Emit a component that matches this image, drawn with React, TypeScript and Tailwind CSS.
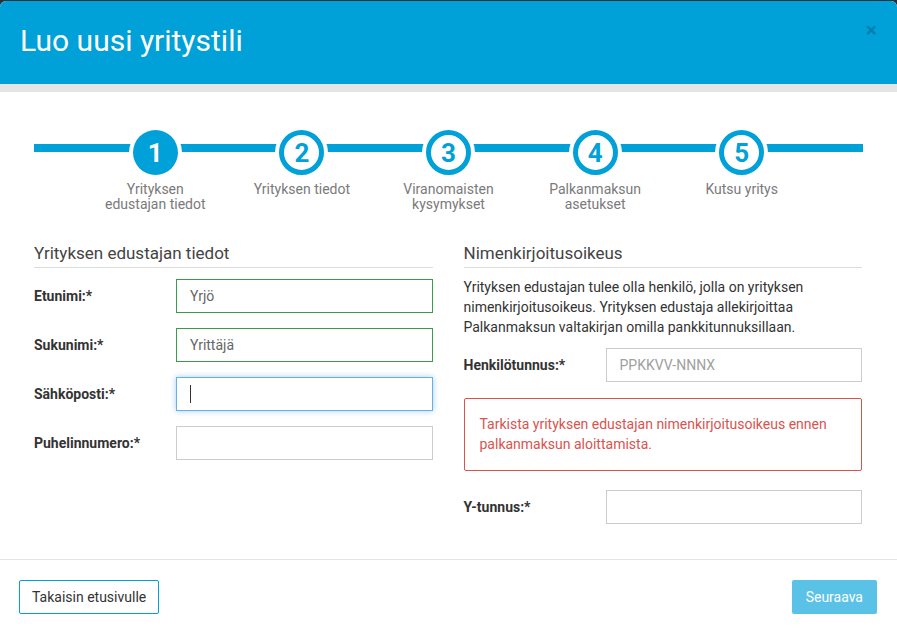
import { ReactNode } from 'react';

const steps = [
  { n: 1, label: ['Yrityksen', 'edustajan tiedot'], active: true },
  { n: 2, label: ['Yrityksen tiedot'] },
  { n: 3, label: ['Viranomaisten', 'kysymykset'] },
  { n: 4, label: ['Palkanmaksun', 'asetukset'] },
  { n: 5, label: ['Kutsu yritys'] },
];

function Row({ label, children }: { label: string; children: ReactNode }) {
  return (
    <div className="flex items-center">
      <div className="w-[142px] shrink-0 text-[14px] font-bold text-[#333]">{label}</div>
      <div className="flex-1">{children}</div>
    </div>
  );
}

function Field({ value, state, placeholder }: { value?: string; state?: 'ok' | 'focus'; placeholder?: string }) {
  const border =
    state === 'ok'
      ? 'border-[#3c9b4a]'
      : state === 'focus'
      ? 'border-[#66afe9] shadow-[0_0_6px_rgba(102,175,233,0.6)]'
      : 'border-[#cccccc]';
  return (
    <div className={`h-[34px] border ${border} flex items-center px-[13px] text-[14px] bg-white`}>
      {value ? <span className="text-[#666]">{value}</span> : null}
      {placeholder ? <span className="text-[#a0a0a0]">{placeholder}</span> : null}
      {state === 'focus' ? <span className="w-px h-[18px] bg-[#333]" /> : null}
    </div>
  );
}

export default function App() {
  return (
    <div className="w-[897px] h-[634px] bg-[#22313a] pt-px overflow-hidden" style={{ fontFamily: 'Roboto, "Liberation Sans", sans-serif' }}>
      <div className="h-[640px] bg-white rounded-md overflow-hidden flex flex-col">
        {/* header */}
        <div className="h-[83px] bg-[#00a1d8] flex items-center justify-between pl-[20px] pr-[20px]">
          <h1 className="text-[30px] text-white leading-none pb-[3px]">Luo uusi yritystili</h1>
          <span className="text-[21px] font-bold text-black opacity-20 leading-none -mt-[24px]">×</span>
        </div>
        <div className="h-[8px] bg-[#e4e4e4]" />

        {/* stepper */}
        <div className="relative mx-[34px] mt-[34px] px-[48px]">
          <div className="absolute left-0 right-0 top-[18px] h-[8px] bg-[#00a1d8]" />
          <div className="relative grid grid-cols-5">
            {steps.map((s) => (
              <div key={s.n} className="flex flex-col items-center">
                <div className="rounded-full bg-white p-[4px]">
                  <div
                    className={`w-[45px] h-[45px] rounded-full flex items-center justify-center text-[26px] font-bold leading-none ${
                      s.active ? 'bg-[#00a1d8] text-white' : 'bg-white border-[5px] border-[#00a1d8] text-[#00a1d8]'
                    }`}
                  >
                    {s.n}
                  </div>
                </div>
                <div className="mt-[3px] text-center text-[14px] leading-[15px] text-[#7a7a7a]">
                  {s.label.map((l) => (
                    <div key={l}>{l}</div>
                  ))}
                </div>
              </div>
            ))}
          </div>
        </div>

        {/* form */}
        <div className="grid grid-cols-2 gap-[31px] pl-[34px] pr-[35px] mt-[31px] h-[316px]">
          <div>
            <h2 className="text-[17px] text-[#444] pb-[4px] border-b border-[#dddddd] leading-[20px]">Yrityksen edustajan tiedot</h2>
            <div className="mt-[11px] flex flex-col gap-[15px]">
              <Row label="Etunimi:*"><Field value="Yrjö" state="ok" /></Row>
              <Row label="Sukunimi:*"><Field value="Yrittäjä" state="ok" /></Row>
              <Row label="Sähköposti:*"><Field state="focus" /></Row>
              <Row label="Puhelinnumero:*"><Field /></Row>
            </div>
          </div>
          <div>
            <h2 className="text-[17px] text-[#444] pb-[4px] border-b border-[#dddddd] leading-[20px]">Nimenkirjoitusoikeus</h2>
            <p className="mt-[9px] text-[14px] leading-[20px] text-[#333]">
              Yrityksen edustajan tulee olla henkilö, jolla on yrityksen nimenkirjoitusoikeus. Yrityksen edustaja
              allekirjoittaa Palkanmaksun valtakirjan omilla pankkitunnuksillaan.
            </p>
            <div className="mt-[11px]">
              <Row label="Henkilötunnus:*"><Field placeholder="PPKKVV-NNNX" /></Row>
            </div>
            <div className="mt-[16px] border border-[#d9534f] rounded-[2px] px-[15px] pt-[15px] pb-[16px] text-[14px] leading-[20px] text-[#d9534f]">
              Tarkista yrityksen edustajan nimenkirjoitusoikeus ennen palkanmaksun aloittamista.
            </div>
            <div className="mt-[19px]">
              <Row label="Y-tunnus:*"><Field /></Row>
            </div>
          </div>
        </div>

        {/* footer */}
        <div className="border-t border-[#e5e5e5] flex items-center justify-between pl-[19px] pr-[20px] pt-[20px]">
          <button className="h-[34px] px-[12px] border border-[#00a1d8] rounded-[2px] text-[14px] text-[#333] bg-white">
            Takaisin etusivulle
          </button>
          <button className="h-[34px] px-[14px] rounded-[2px] text-[14px] text-white bg-[#5bc2e7]">Seuraava</button>
        </div>
      </div>
    </div>
  );
}
